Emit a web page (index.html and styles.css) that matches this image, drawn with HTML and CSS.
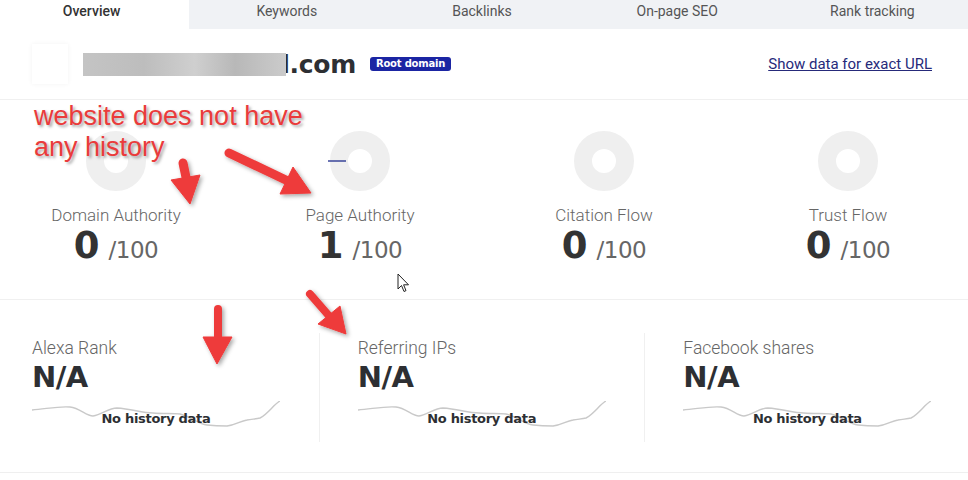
FILE: index.html
```html
<!DOCTYPE html>
<html lang="en">
<head>
<meta charset="utf-8">
<title>Overview</title>
<link rel="stylesheet" href="styles.css">
</head>
<body>
<div class="page">
  <nav class="tabs">
    <div class="tab active">Overview</div>
    <div class="tab">Keywords</div>
    <div class="tab">Backlinks</div>
    <div class="tab">On-page SEO</div>
    <div class="tab">Rank tracking</div>
  </nav>

  <header class="domain-row">
    <div class="avatar"></div>
    <div class="domain"><span class="blur"></span>d.com</div>
    <span class="badge">Root domain</span>
    <a class="exact-link" href="#">Show data for exact URL</a>
  </header>

  <section class="metrics">
    <div class="metric">
      <svg class="donut" width="60" height="60" viewBox="0 0 60 60"><circle cx="30" cy="30" r="21" fill="none" stroke="#efefef" stroke-width="18"/></svg>
      <div class="metric-label">Domain Authority</div>
      <div class="metric-value"><b>0</b><span class="of">/100</span></div>
    </div>
    <div class="metric">
      <svg class="donut" width="60" height="60" viewBox="0 0 60 60"><circle cx="30" cy="30" r="21" fill="none" stroke="#efefef" stroke-width="18"/><line x1="-2" y1="30" x2="16" y2="30" stroke="#1c2a8c" stroke-width="1.3"/></svg>
      <div class="metric-label">Page Authority</div>
      <div class="metric-value"><b>1</b><span class="of">/100</span></div>
    </div>
    <div class="metric">
      <svg class="donut" width="60" height="60" viewBox="0 0 60 60"><circle cx="30" cy="30" r="21" fill="none" stroke="#efefef" stroke-width="18"/></svg>
      <div class="metric-label">Citation Flow</div>
      <div class="metric-value"><b>0</b><span class="of">/100</span></div>
    </div>
    <div class="metric">
      <svg class="donut" width="60" height="60" viewBox="0 0 60 60"><circle cx="30" cy="30" r="21" fill="none" stroke="#efefef" stroke-width="18"/></svg>
      <div class="metric-label">Trust Flow</div>
      <div class="metric-value"><b>0</b><span class="of">/100</span></div>
    </div>
  </section>

  <section class="stats">
    <div class="stat">
      <div class="stat-label">Alexa Rank</div>
      <div class="stat-value">N/A</div>
      <div class="spark">
        <svg width="248" height="28" viewBox="0 0 248 28"><path d="M0 9 C14 8 26 5 38 6 C48 7 54 15 61 15 C70 14 76 7 85 7 C100 8 110 12 121 12 C132 13 140 12 148 13 C160 16 166 23 175 24 C184 25 188 25 195 25 C204 24 208 20 215 19 C221 18 224 18 228 17 C236 13 242 3 248 0" fill="none" stroke="#c9c9c9" stroke-width="1.4"/></svg>
        <span class="spark-text">No history data</span>
      </div>
    </div>
    <div class="stat">
      <div class="stat-label">Referring IPs</div>
      <div class="stat-value">N/A</div>
      <div class="spark">
        <svg width="248" height="28" viewBox="0 0 248 28"><path d="M0 9 C14 8 26 5 38 6 C48 7 54 15 61 15 C70 14 76 7 85 7 C100 8 110 12 121 12 C132 13 140 12 148 13 C160 16 166 23 175 24 C184 25 188 25 195 25 C204 24 208 20 215 19 C221 18 224 18 228 17 C236 13 242 3 248 0" fill="none" stroke="#c9c9c9" stroke-width="1.4"/></svg>
        <span class="spark-text">No history data</span>
      </div>
    </div>
    <div class="stat">
      <div class="stat-label">Facebook shares</div>
      <div class="stat-value">N/A</div>
      <div class="spark">
        <svg width="248" height="28" viewBox="0 0 248 28"><path d="M0 9 C14 8 26 5 38 6 C48 7 54 15 61 15 C70 14 76 7 85 7 C100 8 110 12 121 12 C132 13 140 12 148 13 C160 16 166 23 175 24 C184 25 188 25 195 25 C204 24 208 20 215 19 C221 18 224 18 228 17 C236 13 242 3 248 0" fill="none" stroke="#c9c9c9" stroke-width="1.4"/></svg>
        <span class="spark-text">No history data</span>
      </div>
    </div>
  </section>
</div>

<div class="note">website does not have<br>any history</div>

<svg class="arrows" width="968" height="480" viewBox="0 0 968 480">
  <defs>
    <filter id="sh" x="-30%" y="-30%" width="160%" height="160%">
      <feDropShadow dx="2" dy="2" stdDeviation="2" flood-color="#000" flood-opacity="0.35"/>
    </filter>
  </defs>
  <g fill="#ee3b3b" stroke="#ee3b3b" filter="url(#sh)">
    <line x1="183" y1="163" x2="187" y2="182" stroke-width="9" stroke-linecap="round"/>
    <polygon points="171,180 200,175 190,204" stroke-width="1"/>
    <line x1="229" y1="153" x2="290" y2="182" stroke-width="9" stroke-linecap="round"/>
    <polygon points="293,167 280,194 311,193" stroke-width="1"/>
    <line x1="218" y1="309" x2="218" y2="340" stroke-width="8" stroke-linecap="round"/>
    <polygon points="203,337 232,337 217,364" stroke-width="1"/>
    <line x1="310" y1="294" x2="330" y2="317" stroke-width="8" stroke-linecap="round"/>
    <polygon points="340,306 318,324 346,334" stroke-width="1"/>
  </g>
</svg>

<svg class="cursor" width="14" height="22" viewBox="0 0 14 22">
  <path d="M1 1 L1 16 L4.5 12.5 L7 18.5 L9 17.6 L6.6 11.8 L11.5 11.8 Z" fill="#fff" stroke="#222" stroke-width="1" stroke-linejoin="round"/>
</svg>
</body>
</html>
```

FILE: styles.css
```css
* { box-sizing: border-box; }

body {
  margin: 0;
  background: #fff;
  font-family: Roboto, "Liberation Sans", sans-serif;
  color: #444;
  width: 968px;
  height: 480px;
  overflow: hidden;
  position: relative;
}

.page {
  width: 976px;
  margin-left: -6px;
}

/* Tabs */
.tabs {
  display: flex;
  height: 29px;
  background: #f0f2f5;
}
.tab {
  flex: 1;
  text-align: center;
  font-size: 14px;
  line-height: 22px;
  color: #555;
}
.tab.active {
  background: #fff;
  font-weight: 500;
  color: #333;
}

/* Domain row */
.domain-row {
  display: flex;
  align-items: center;
  height: 71px;
  padding: 0 38px;
  border-bottom: 1px solid #f0f0f0;
}
.avatar {
  width: 36px;
  height: 40px;
  background: #fff;
  box-shadow: 0 0 5px rgba(0,0,0,0.05);
  margin-right: 15px;
}
.domain {
  font-family: "DejaVu Sans", sans-serif;
  font-weight: 700;
  font-size: 25px;
  color: #2d2f33;
  letter-spacing: -0.3px;
  display: flex;
  align-items: center;
}
.blur {
  display: inline-block;
  width: 203px;
  height: 23px;
  margin-right: -14px;
  position: relative;
  z-index: 1;
  background: linear-gradient(90deg, #c4c4c4 0%, #bdbdbd 30%, #cfcfcf 55%, #b8b8b8 75%, #cbcbcb 100%);
  filter: blur(0.6px);
}
.badge {
  margin-left: 14px;
  background: #1b25a3;
  color: #fff;
  font-family: "DejaVu Sans", sans-serif;
  font-weight: 700;
  font-size: 10px;
  line-height: 14px;
  padding: 0 6px;
  border-radius: 3px;
  letter-spacing: -0.2px;
}
.exact-link {
  margin-left: auto;
  font-size: 15px;
  color: #262a7a;
  text-decoration: underline;
}

/* Metrics */
.metrics {
  display: flex;
  height: 200px;
  border-bottom: 1px solid #f0f0f0;
}
.metric {
  flex: 1;
  display: flex;
  flex-direction: column;
  align-items: center;
  padding-top: 31px;
}
.donut { overflow: visible; display: block; }
.metric-label {
  margin-top: 13px;
  font-size: 17px;
  font-weight: 300;
  color: #666;
  line-height: 22px;
}
.metric-value {
  line-height: 40px;
  display: flex;
  align-items: baseline;
}
.metric-value b {
  font-family: "DejaVu Sans", sans-serif;
  font-weight: 700;
  font-size: 37px;
  color: #333;
}
.metric-value .of {
  margin-left: 9px;
  font-family: "DejaVu Sans", sans-serif;
  font-size: 23px;
  color: #666;
  letter-spacing: -0.5px;
}

/* Stats */
.stats {
  display: flex;
  height: 173px;
  border-bottom: 1px solid #efefef;
}
.stat {
  flex: 1;
  margin: 33px 0 30px;
  padding-left: 38px;
  padding-top: 4px;
}
.stat + .stat { border-left: 1px solid #f0f0f0; }
.stat-label {
  font-size: 17.5px;
  font-weight: 300;
  color: #666;
  line-height: 22px;
}
.stat-value {
  font-family: "DejaVu Sans", sans-serif;
  font-weight: 700;
  font-size: 29px;
  color: #2d2f33;
  line-height: 36px;
  letter-spacing: -0.5px;
}
.spark {
  position: relative;
  width: 248px;
  height: 28px;
  margin-top: 6px;
}
.spark svg { display: block; }
.spark-text {
  position: absolute;
  left: 0;
  right: 0;
  top: 10px;
  text-align: center;
  font-family: "DejaVu Sans", sans-serif;
  font-weight: 700;
  font-size: 13px;
  color: #2d2f33;
  letter-spacing: -0.3px;
}

/* Annotations */
.note {
  position: absolute;
  left: 34px;
  top: 101px;
  font-family: "Liberation Sans", Arial, sans-serif;
  font-size: 27px;
  line-height: 31px;
  color: #ea3b3b;
  text-shadow: 2px 2px 3px rgba(0,0,0,0.35);
}
.arrows {
  position: absolute;
  left: 0;
  top: 0;
  pointer-events: none;
}
.cursor {
  position: absolute;
  left: 397px;
  top: 273px;
}
```
